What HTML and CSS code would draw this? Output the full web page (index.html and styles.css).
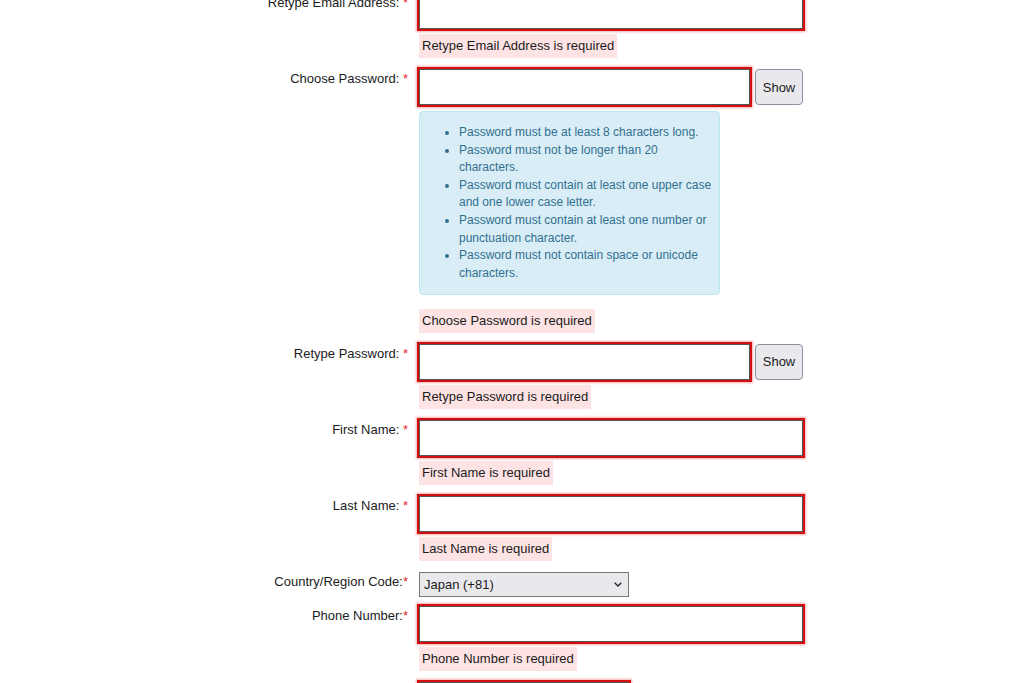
FILE: index.html
```html
<!DOCTYPE html>
<html lang="en">
<head>
<meta charset="utf-8">
<title>Register</title>
<link rel="stylesheet" href="styles.css">
</head>
<body>
<form class="reg-form">
  <div class="form-row">
    <label class="form-label">Retype Email Address: <span class="req">*</span></label>
    <div class="form-field">
      <input class="text-input invalid" type="email">
      <div class="error-msg">Retype Email Address is required</div>
    </div>
  </div>

  <div class="form-row">
    <label class="form-label">Choose Password: <span class="req">*</span></label>
    <div class="form-field">
      <div class="pw-line">
        <input class="text-input pw-input invalid" type="password">
        <button class="btn-show" type="button">Show</button>
      </div>
      <div class="pw-hint">
        <ul>
          <li>Password must be at least 8 characters long.</li>
          <li>Password must not be longer than 20 characters.</li>
          <li>Password must contain at least one upper case and one lower case letter.</li>
          <li>Password must contain at least one number or punctuation character.</li>
          <li>Password must not contain space or unicode characters.</li>
        </ul>
      </div>
      <div class="error-msg error-after-hint">Choose Password is required</div>
    </div>
  </div>

  <div class="form-row">
    <label class="form-label">Retype Password: <span class="req">*</span></label>
    <div class="form-field">
      <div class="pw-line">
        <input class="text-input pw-input invalid" type="password">
        <button class="btn-show" type="button">Show</button>
      </div>
      <div class="error-msg">Retype Password is required</div>
    </div>
  </div>

  <div class="form-row">
    <label class="form-label">First Name: <span class="req">*</span></label>
    <div class="form-field">
      <input class="text-input invalid" type="text">
      <div class="error-msg">First Name is required</div>
    </div>
  </div>

  <div class="form-row">
    <label class="form-label">Last Name: <span class="req">*</span></label>
    <div class="form-field">
      <input class="text-input invalid" type="text">
      <div class="error-msg">Last Name is required</div>
    </div>
  </div>

  <div class="form-row row-select">
    <label class="form-label">Country/Region Code:<span class="req">*</span></label>
    <div class="form-field">
      <div class="select-wrap">
        <select class="select-input">
          <option>Japan (+81)</option>
        </select>
        <svg class="chevron" width="8" height="5" viewBox="0 0 8 5" aria-hidden="true"><path d="M0.7 0.7 L4 4 L7.3 0.7" fill="none" stroke="#222" stroke-width="1.3"/></svg>
      </div>
    </div>
  </div>

  <div class="form-row">
    <label class="form-label">Phone Number:<span class="req">*</span></label>
    <div class="form-field">
      <input class="text-input invalid" type="tel">
      <div class="error-msg">Phone Number is required</div>
    </div>
  </div>

  <div class="form-row">
    <label class="form-label"></label>
    <div class="form-field">
      <input class="text-input short-input invalid" type="text">
    </div>
  </div>
</form>
</body>
</html>
```

FILE: styles.css
```css
html, body {
  margin: 0;
  padding: 0;
  background: #ffffff;
}

body {
  font-family: "Liberation Sans", Arial, sans-serif;
  font-size: 13px;
  color: #1b1b1b;
  overflow: hidden;
}

.reg-form {
  margin-top: -7px;
}

.form-row {
  display: grid;
  grid-template-columns: 408px 384px;
  column-gap: 11px;
  margin-bottom: 11px;
}

.row-select {
  margin-bottom: 9px;
}

.form-label {
  padding-top: 1px;
  text-align: right;
  line-height: 18px;
  white-space: nowrap;
}

.req {
  color: #e3262b;
}

.form-field {
  display: flex;
  flex-direction: column;
  align-items: flex-start;
}

.text-input {
  display: block;
  box-sizing: border-box;
  width: 384px;
  height: 36px;
  margin: 0;
  padding: 2px 4px;
  border: 1px solid #555555;
  border-radius: 0;
  background: #ffffff;
  font: inherit;
  outline: none;
}

.invalid {
  box-shadow: 0 0 0 2px #d30f0f, 0 0 2px 3px rgba(225, 20, 20, 0.35);
}

.short-input {
  width: 210px;
}

.pw-line {
  display: flex;
  gap: 5px;
}

.pw-input {
  width: 331px;
}

.btn-show {
  box-sizing: border-box;
  width: 48px;
  height: 36px;
  margin: 0;
  padding: 0;
  border: 1px solid #8f8f9d;
  border-radius: 4px;
  background: #e9e9ed;
  color: #1b1b1b;
  font: inherit;
  font-size: 13px;
}

.error-msg {
  margin-top: 5px;
  padding: 3px 3px;
  line-height: 18px;
  background: #fde3e4;
  color: #1b1b1b;
}

.error-after-hint {
  margin-top: 14px;
}

.pw-hint {
  box-sizing: border-box;
  width: 301px;
  margin-top: 6px;
  padding: 12px 6px 11.6px 9px;
  border: 1px solid #bce8f1;
  border-radius: 4px;
  background: #d9edf7;
  color: #31708f;
  font-size: 12px;
  line-height: 17.6px;
}

.pw-hint ul {
  margin: 0;
  padding-left: 30px;
}

.select-wrap {
  position: relative;
  width: 210px;
}

.select-input {
  display: block;
  box-sizing: border-box;
  width: 210px;
  height: 25px;
  margin: 0;
  padding: 0 4px;
  border: 1px solid #767676;
  border-radius: 0;
  background: #e9e9ed;
  color: #1b1b1b;
  font: inherit;
  -webkit-appearance: none;
  appearance: none;
}

.chevron {
  position: absolute;
  right: 7px;
  top: 10px;
  pointer-events: none;
}
```
